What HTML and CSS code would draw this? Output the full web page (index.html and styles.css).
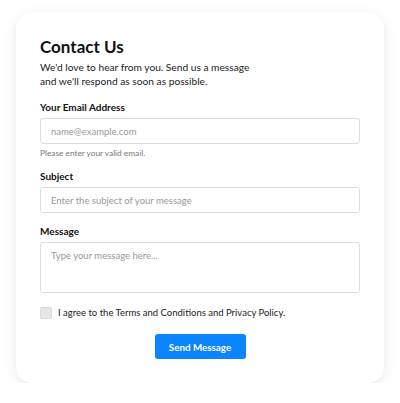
FILE: index.html
```html
<!DOCTYPE html>
<html>
<head>
<meta charset="utf-8">
<link rel="stylesheet" href="styles.css">
</head>
<body>
<form class="card">
  <h1 class="title">Contact Us</h1>
  <p class="intro">We'd love to hear from you. Send us a message<br>and we'll respond as soon as possible.</p>
  <div class="field">
    <label class="label">Your Email Address</label>
    <input class="input" type="text" placeholder="name@example.com">
    <div class="help">Please enter your valid email.</div>
  </div>
  <div class="field">
    <label class="label">Subject</label>
    <input class="input" type="text" placeholder="Enter the subject of your message">
  </div>
  <div class="field field-msg">
    <label class="label">Message</label>
    <textarea class="input textarea" placeholder="Type your message here..."></textarea>
  </div>
  <label class="agree"><span class="box"></span>I agree to the Terms and Conditions and Privacy Policy.</label>
  <div class="actions"><button class="btn" type="button">Send Message</button></div>
</form>
</body>
</html>
```
FILE: styles.css
```css
* { box-sizing: border-box; }
html, body { margin: 0; background: #fff; }
body {
  padding: 12px 16px 0;
  font-family: Lato, "Noto Sans", sans-serif;
  color: #222;
}
.card {
  width: 368px;
  height: 371px;
  background: #fff;
  border-radius: 16px;
  box-shadow: 0 4px 14px rgba(0,0,0,0.08), 0 0 2px rgba(0,0,0,0.04);
  padding: 24px 24px 0;
  display: flex;
  flex-direction: column;
}
.title {
  margin: 0;
  font-size: 17px;
  line-height: 22px;
  font-weight: 700;
  color: #111;
}
.intro {
  margin: 2px 0 0;
  font-size: 10.2px;
  line-height: 14px;
  color: #222;
}
.field { display: flex; flex-direction: column; margin-top: 13px; }
.field + .field { margin-top: 11px; }
.field + .field-msg { margin-top: 12px; }
.label {
  font-size: 10px;
  line-height: 13px;
  font-weight: 700;
  color: #111;
  margin-bottom: 4px;
}
.input {
  width: 100%;
  height: 26px;
  border: 1px solid #dcdcdc;
  border-radius: 3px;
  padding: 0 10px;
  font-family: inherit;
  font-size: 9.5px;
  color: #222;
  background: #fff;
  outline: none;
}
.input::placeholder { color: #999; }
.textarea {
  height: 51px;
  padding: 6px 10px;
  resize: none;
  line-height: 14px;
}
.help {
  font-size: 8.3px;
  line-height: 11px;
  color: #777;
  margin-top: 4px;
}
.agree {
  display: flex;
  align-items: center;
  margin-top: 13px;
  font-size: 9.5px;
  line-height: 13px;
  color: #222;
}
.box {
  width: 12px;
  height: 12px;
  border-radius: 2px;
  background: #e6e6e6;
  border: 1px solid #dadada;
  margin-right: 6px;
}
.actions { display: flex; justify-content: center; margin-top: 15px; }
.btn {
  width: 91px;
  height: 25px;
  border: none;
  border-radius: 3px;
  background: #0a84ff;
  color: #fff;
  font-family: inherit;
  font-size: 9.8px;
  font-weight: 700;
}
```
